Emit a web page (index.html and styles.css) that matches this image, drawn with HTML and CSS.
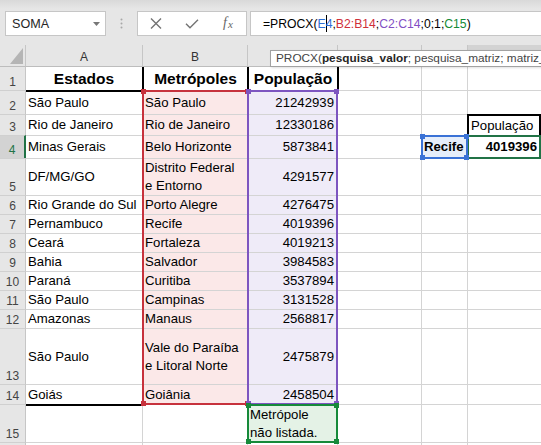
FILE: index.html
```html
<!DOCTYPE html>
<html lang="pt-BR">
<head>
<meta charset="utf-8">
<title>PROCX</title>
<link rel="stylesheet" href="styles.css">
</head>
<body>
<div class="bar">
  <div class="namebox"><span>SOMA</span><svg class="dd" width="7" height="4" viewBox="0 0 7 4"><path d="M0 0H7L3.5 4Z"/></svg></div>
  <div class="grip"><svg width="3" height="12" viewBox="0 0 3 12"><circle cx="1.5" cy="1.5" r="1"/><circle cx="1.5" cy="5.5" r="1"/><circle cx="1.5" cy="9.5" r="1"/></svg></div>
  <div class="btns">
    <span class="btn"><svg width="12" height="11" viewBox="0 0 12 11"><path d="M1 0.5L11 10.5M11 0.5L1 10.5"/></svg></span>
    <span class="btn"><svg width="14" height="10" viewBox="0 0 14 10"><path d="M1 4.8L5 8.8L13 0.8"/></svg></span>
    <span class="btn"><span class="fx">f<span class="x">x</span></span></span>
  </div>
  <div class="fbox">=PROCX(<span class="r-b">E<span class="caret"></span>4</span>;<span class="r-r">B2:B14</span>;<span class="r-p">C2:C14</span>;0;1;<span class="r-g">C15</span>)</div>
</div>
<div class="sheet">
  <div class="cells">
    <div class="corner"><svg width="25" height="21" viewBox="0 0 25 21"><path d="M10 19H23V3Z"/></svg></div>
    <div class="ch a">A</div><div class="ch">B</div><div class="ch"></div><div class="ch"></div><div class="ch"></div><div class="ch sel"></div>

    <div class="rh r1">1</div><div class="c a r1 hd ctr">Estados</div><div class="c r1 hd ctr bl">Metrópoles</div><div class="c r1 hd ctr bl">População</div><div class="c r1 bl"></div><div class="c r1"></div><div class="c r1"></div>

    <div class="rh">2</div><div class="c a bt">São Paulo</div><div class="c bt pk">São Paulo</div><div class="c bt lv n">21242939</div><div class="c"></div><div class="c"></div><div class="c"></div>

    <div class="rh">3</div><div class="c a">Rio de Janeiro</div><div class="c pk">Rio de Janeiro</div><div class="c lv n">12330186</div><div class="c"></div><div class="c"></div><div class="c bx">População</div>

    <div class="rh sel">4</div><div class="c a">Minas Gerais</div><div class="c pk">Belo Horizonte</div><div class="c lv n">5873841</div><div class="c"></div><div class="c bf b">Recife</div><div class="c b n f4">4019396</div>

    <div class="rh">5</div><div class="c a">DF/MG/GO</div><div class="c pk w"><span>Distrito Federal<br>e Entorno</span></div><div class="c lv n">4291577</div><div class="c"></div><div class="c"></div><div class="c"></div>

    <div class="rh">6</div><div class="c a">Rio Grande do Sul</div><div class="c pk">Porto Alegre</div><div class="c lv n">4276475</div><div class="c"></div><div class="c"></div><div class="c"></div>

    <div class="rh">7</div><div class="c a">Pernambuco</div><div class="c pk">Recife</div><div class="c lv n">4019396</div><div class="c"></div><div class="c"></div><div class="c"></div>

    <div class="rh">8</div><div class="c a">Ceará</div><div class="c pk">Fortaleza</div><div class="c lv n">4019213</div><div class="c"></div><div class="c"></div><div class="c"></div>

    <div class="rh">9</div><div class="c a">Bahia</div><div class="c pk">Salvador</div><div class="c lv n">3984583</div><div class="c"></div><div class="c"></div><div class="c"></div>

    <div class="rh">10</div><div class="c a">Paraná</div><div class="c pk">Curitiba</div><div class="c lv n">3537894</div><div class="c"></div><div class="c"></div><div class="c"></div>

    <div class="rh">11</div><div class="c a">São Paulo</div><div class="c pk">Campinas</div><div class="c lv n">3131528</div><div class="c"></div><div class="c"></div><div class="c"></div>

    <div class="rh">12</div><div class="c a">Amazonas</div><div class="c pk">Manaus</div><div class="c lv n">2568817</div><div class="c"></div><div class="c"></div><div class="c"></div>

    <div class="rh">13</div><div class="c a">São Paulo</div><div class="c pk w"><span>Vale do Paraíba<br>e Litoral Norte</span></div><div class="c lv n">2475879</div><div class="c"></div><div class="c"></div><div class="c"></div>

    <div class="rh">14</div><div class="c a">Goiás</div><div class="c pk">Goiânia</div><div class="c lv n">2458504</div><div class="c"></div><div class="c"></div><div class="c"></div>

    <div class="rh">15</div><div class="c a bt"></div><div class="c"></div><div class="c gf w"><span>Metrópole<br>não listada.</span></div><div class="c"></div><div class="c"></div><div class="c"></div>

    <div class="rh"></div><div class="c a"></div><div class="c"></div><div class="c"></div><div class="c"></div><div class="c"></div><div class="c"></div>
  </div>
  <div class="marks">
    <div class="rng red"><i class="h h1"></i><i class="h h2"></i><i class="h h3"></i><i class="h h4"></i></div>
    <div class="rng pur"><i class="h h1"></i><i class="h h2"></i><i class="h h3"></i><i class="h h4"></i></div>
    <div class="rng grn"><i class="h h1"></i><i class="h h2"></i><i class="h h3"></i><i class="h h4"></i></div>
    <div class="rng act"></div>
    <div class="rng blu"><i class="h h1"></i><i class="h h2"></i><i class="h h3"></i><i class="h h4"></i></div>
  </div>
  <div class="tip">PROCX(<b>pesquisa_valor</b>; pesquisa_matriz; matriz_retorno; [se_não_encontrada]; [modo_correspondência]; [modo_pesquisa])</div>
</div>
</body>
</html>
```

FILE: styles.css
```css
* { box-sizing: border-box; margin: 0; padding: 0; }
html, body { width: 541px; height: 445px; overflow: hidden; background: #fff; }
body { font-family: "Liberation Sans", Arial, sans-serif; color: #000; }

/* formula bar */
.bar {
  height: 45px;
  display: flex;
  align-items: flex-start;
  padding: 11px 0 0 5px;
  background: linear-gradient(#d9d9d9, #e6e6e6 9px);
}
.namebox {
  width: 101px; height: 25px;
  background: #fff;
  border: 1px solid #c6c6c6;
  display: flex; align-items: center; justify-content: space-between;
  padding: 0 5px 0 6px;
  font-size: 12.6px;
  color: #262626;
}
.dd { fill: #777; }
.grip { width: 31px; height: 25px; display: flex; align-items: center; justify-content: center; }
.grip svg { fill: #a8a8a8; }
.btns {
  width: 110px; height: 25px;
  background: #fff;
  border: 1px solid #c6c6c6;
  display: flex;
}
.btn { width: 36px; display: flex; align-items: center; justify-content: center; }
.btn svg { fill: none; stroke: #737373; stroke-width: 1.4; }
.fx {
  font-family: "Liberation Serif", serif;
  font-style: italic;
  font-size: 14px;
  line-height: 14px;
  color: #666;
}
.fx .x { font-size: 11px; vertical-align: -1px; margin-left: 1px; }
.fbox {
  flex: 1;
  height: 25px;
  margin-left: 3px;
  background: #fff;
  border: 1px solid #c6c6c6;
  border-right: 0;
  padding: 2px 0 0 12px;
  font-size: 12.2px;
  line-height: 21px;
  white-space: nowrap;
  overflow: hidden;
}
.caret { display: inline-block; width: 1px; height: 17px; background: #000; vertical-align: -4px; margin-right: -1px; }
.r-b { color: #2f6fd6; }
.r-r { color: #cf2f3a; }
.r-p { color: #8250c4; }
.r-g { color: #138a36; }

/* sheet */
.sheet { display: grid; position: relative; }
.cells, .marks {
  grid-area: 1 / 1;
  display: grid;
  grid-template-columns: 26px 116px 105px 90px 84px 46px 74px;
  grid-template-rows: 22px 23px 24px 21px 23px 37px repeat(7, 19px) 56px 20px 38px 20px;
}
.marks { pointer-events: none; }

.corner { background: #e6e6e6; border-right: 1px solid #c6c6c6; border-bottom: 1px solid #bdbdbd; }
.corner svg { display: block; fill: #b5b5b5; }
.ch {
  background: #e6e6e6;
  border-left: 1px solid #c6c6c6;
  border-bottom: 1px solid #bdbdbd;
  display: flex; align-items: center; justify-content: center;
  padding-top: 2px;
  font-size: 12px;
  color: #333;
}
.ch.a { border-left: 0; }
.ch.sel { background: #d3d3d3; color: #217346; border-bottom: 2px solid #217346; }

.rh {
  background: #e6e6e6;
  border-top: 1px solid #d0d0d0;
  border-right: 1px solid #c6c6c6;
  display: flex; align-items: flex-end; justify-content: center;
  font-size: 12px;
  line-height: 14px;
  padding-bottom: 1px;
  color: #444;
}
.rh.r1 { border-top: 0; }
.rh.sel { background: #d3d3d3; color: #217346; border-right: 2px solid #217346; }

.c {
  border-top: 1px solid #d4d4d4;
  border-left: 1px solid #d4d4d4;
  display: flex; align-items: center;
  padding: 0 2px;
  font-size: 13.2px;
  line-height: 18px;
  white-space: nowrap;
}
.c.a { border-left: 0; }
.c.r1 { border-top: 0; }
.n { justify-content: flex-end; padding-right: 3px; }
.f4 { padding-right: 4px; }
.ctr { justify-content: center; }
.hd { font-weight: bold; font-size: 15.5px; }
.b { font-weight: bold; }
.w { white-space: normal; }
.bl { border-left: 2px solid #000; }
.bt { border-top: 2px solid #000; }
.bx { border: 2px solid #000; border-bottom: 0; }
.pk { background: #fbe8e8; }
.lv { background: #efebf8; }
.gf { background: #e4f2e6; }
.bf { background: #e6eefa; }

/* reference ranges */
.rng { position: relative; border: 2px solid currentColor; margin: 0 -1px -1px 0; }
.red { grid-column: 3; grid-row: 3 / 16; color: #c7323d; margin-right: -2px; }
.pur { grid-column: 4; grid-row: 3 / 16; color: #7d55c0; }
.grn { grid-column: 4; grid-row: 16; color: #168a3a; }
.act { grid-column: 7; grid-row: 5; color: #217346; margin-right: 0; }
.blu { grid-column: 6; grid-row: 5; color: #3a72d6; }
.h { position: absolute; width: 5px; height: 5px; background: currentColor; }
.h1 { left: -3px; top: -3px; }
.h2 { right: -3px; top: -3px; }
.h3 { left: -3px; bottom: -3px; }
.h4 { right: -3px; bottom: -3px; }

.tip {
  position: absolute;
  left: 270px; top: 5px; right: -12px;
  height: 17px;
  background: #fff;
  border: 1px solid #a2a2a2;
  box-shadow: 1px 1px 2px rgba(0, 0, 0, .12);
  padding: 0 5px;
  font-size: 11.8px;
  line-height: 15px;
  white-space: nowrap;
  overflow: hidden;
  color: #444;
  z-index: 2;
}
.tip b { color: #262626; }
```
